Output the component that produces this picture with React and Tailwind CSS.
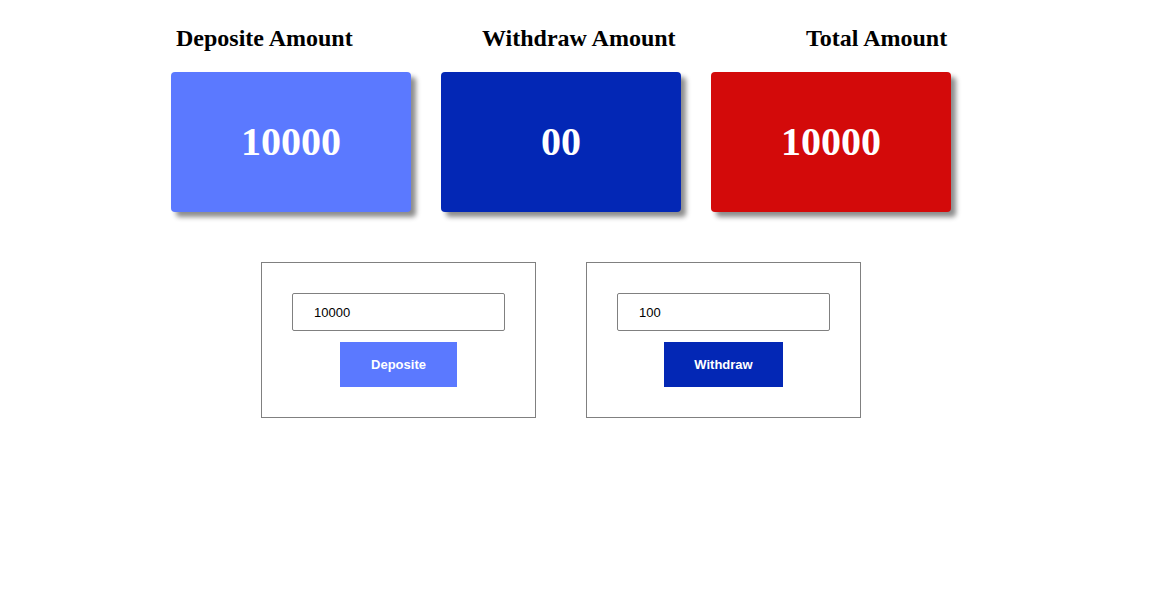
export default function App() {
  const serif = { fontFamily: '"Liberation Serif", "Times New Roman", serif' };
  const sans = { fontFamily: '"Liberation Sans", Arial, sans-serif' };
  return (
    <div className="w-[1159px] h-[613px] bg-white">
      <div className="ml-[171px] pt-[24px] w-[780px]">
        <div className="grid grid-cols-[240px_240px_240px] gap-x-[30px] text-[24px] leading-[28px] font-bold text-black" style={serif}>
          <h2 className="pl-[5px]">Deposite Amount</h2>
          <h2 className="pl-[41px]">Withdraw Amount</h2>
          <h2 className="pl-[95px]">Total Amount</h2>
        </div>
        <div className="mt-[20px] grid grid-cols-[240px_240px_240px] gap-x-[30px]" style={serif}>
          <div className="h-[140px] rounded-[4px] bg-[#5b79ff] shadow-[5px_5px_5px_rgba(0,0,0,0.45)] flex items-center justify-center text-white text-[40px] font-bold">10000</div>
          <div className="h-[140px] rounded-[4px] bg-[#0327b5] shadow-[5px_5px_5px_rgba(0,0,0,0.45)] flex items-center justify-center text-white text-[40px] font-bold">00</div>
          <div className="h-[140px] rounded-[4px] bg-[#d30a0a] shadow-[5px_5px_5px_rgba(0,0,0,0.45)] flex items-center justify-center text-white text-[40px] font-bold">10000</div>
        </div>
      </div>
      <div className="mt-[50px] ml-[261px] flex gap-[50px]" style={sans}>
        <div className="w-[275px] h-[156px] border border-[#808080] flex flex-col items-center pt-[30px]">
          <input readOnly value="10000" className="w-[213px] h-[38px] border border-[#808080] rounded-[2px] pl-[21px] text-[13px] text-black outline-none" style={sans} />
          <button className="mt-[11px] h-[45px] px-[31px] bg-[#5b79ff] text-white text-[13px] font-bold" style={sans}>Deposite</button>
        </div>
        <div className="w-[275px] h-[156px] border border-[#808080] flex flex-col items-center pt-[30px]">
          <input readOnly value="100" className="w-[213px] h-[38px] border border-[#808080] rounded-[2px] pl-[21px] text-[13px] text-black outline-none" style={sans} />
          <button className="mt-[11px] h-[45px] px-[30px] bg-[#0327b5] text-white text-[13px] font-bold" style={sans}>Withdraw</button>
        </div>
      </div>
    </div>
  );
}
